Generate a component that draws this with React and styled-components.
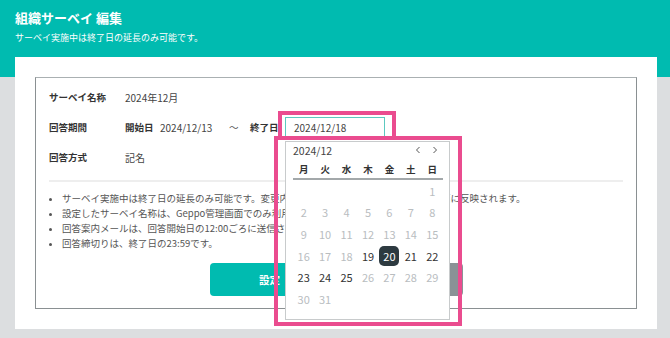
import React from 'react';
import styled, { createGlobalStyle } from 'styled-components';

const GlobalStyle = createGlobalStyle`
  body {
    margin: 0;
    background: #dcdee0;
    font-family: "Noto Sans CJK JP", "Noto Sans", sans-serif;
  }
`;

const Page = styled.div`
  width: 670px;
  height: 338px;
  overflow: hidden;
  background: #dcdee0;
`;

const Header = styled.div`
  height: 77px;
  box-sizing: border-box;
  padding: 7px 15px 0;
  background: #00bbb0;
  color: #fff;
`;

const Title = styled.div`
  font-size: 13px;
  font-weight: 700;
  line-height: 21px;
`;

const Sub = styled.div`
  font-size: 9px;
  line-height: 16px;
  margin-top: 2px;
`;

const Card = styled.div`
  margin: -20px 13px 0 15px;
  height: 272px;
  box-sizing: border-box;
  padding: 20px 20px 20px;
  background: #fff;
`;

const Frame = styled.div`
  position: relative;
  border: 1px solid #8a9092;
  border-top-color: #aab0b2;
  padding: 4px 13px 12px;
  color: #333;
`;

const Row = styled.div`
  display: flex;
  align-items: center;
  height: 30px;
  font-size: 9.5px;
`;

const Label = styled.div`
  width: 76px;
  flex-shrink: 0;
  font-weight: 700;
`;

const Sublabel = styled.span`
  width: 35px;
  flex-shrink: 0;
  font-weight: 700;
`;

const Value = styled.span`
  color: #444;
  font-size: 10px;
  width: ${p => p.$w || 'auto'};
  flex-shrink: 0;
`;

const Tilde = styled.span`
  width: 21px;
  flex-shrink: 0;
  color: #555;
`;

const InputWrap = styled.div`
  position: relative;
`;

const DateInput = styled.div`
  width: 100px;
  height: 20px;
  box-sizing: border-box;
  border: 1px solid #5cc9c0;
  padding-left: 8px;
  display: flex;
  align-items: center;
  font-size: 10px;
  color: #444;
`;

const Highlight = styled.div`
  position: absolute;
  box-sizing: border-box;
  border: 4px solid #ea4c8f;
  pointer-events: none;
  z-index: 3;
`;

const Popup = styled.div`
  position: absolute;
  top: 24px;
  left: 0;
  width: 165px;
  height: 179px;
  box-sizing: border-box;
  border: 1px solid #c8cbcc;
  background: #fff;
  padding: 0 7px;
  z-index: 2;
`;

const CalHead = styled.div`
  display: flex;
  align-items: center;
  justify-content: space-between;
  height: 16px;
  font-size: 10.5px;
  color: #444;
`;

const Nav = styled.div`
  display: flex;
  gap: 11px;
  padding-right: 4px;
`;

const Week = styled.div`
  display: grid;
  grid-template-columns: repeat(7, 1fr);
  width: 150px;
  height: 18px;
  align-items: center;
  margin-top: 2px;
  border-bottom: 2px solid #a3a8aa;
  font-size: 9.5px;
  font-weight: 700;
  color: #333;
  text-align: center;
`;

const Days = styled.div`
  display: grid;
  grid-template-columns: repeat(7, 1fr);
  grid-auto-rows: 21.6px;
  width: 150px;
`;

const Day = styled.div`
  display: flex;
  align-items: center;
  justify-content: center;
  font-size: 11px;
  color: ${p => (p.$on ? '#333' : '#b9bdbf')};
`;

const Selected = styled.span`
  display: flex;
  align-items: center;
  justify-content: center;
  width: 20px;
  height: 20px;
  border-radius: 5px;
  background: #2d3a40;
  color: #fff;
`;

const Divider = styled.div`
  height: 2px;
  background: #eeeeee;
  margin-top: 8px;
`;

const Notes = styled.ul`
  margin: 9px 0 0;
  padding-left: 13px;
  font-size: 9.5px;
  line-height: 15px;
  color: #555;
  li::marker {
    font-size: 9px;
  }
`;

const Buttons = styled.div`
  display: flex;
  justify-content: center;
  gap: 13px;
  margin-top: 12px;
`;

const Button = styled.div`
  width: 120px;
  height: 33px;
  border-radius: 4px;
  display: flex;
  align-items: center;
  justify-content: center;
  font-size: 10.5px;
  font-weight: 700;
  color: #fff;
  background: ${p => (p.$gray ? '#8a9296' : '#00bbb0')};
`;

const Chevron = ({ dir }) => (
  <svg width="6" height="8" viewBox="0 0 6 8">
    <path
      d={dir === 'left' ? 'M4.5 1 L1.5 4 L4.5 7' : 'M1.5 1 L4.5 4 L1.5 7'}
      fill="none"
      stroke="#555"
      strokeWidth="1"
    />
  </svg>
);

const weekdays = ['月', '火', '水', '木', '金', '土', '日'];

const App = () => {
  const cells = [];
  for (let i = 0; i < 6; i++) cells.push(null);
  for (let d = 1; d <= 31; d++) cells.push(d);

  return (
    <Page>
      <GlobalStyle />
      <Header>
        <Title>組織サーベイ 編集</Title>
        <Sub>サーベイ実施中は終了日の延長のみ可能です。</Sub>
      </Header>
      <Card>
        <Frame>
          <Row>
            <Label>サーベイ名称</Label>
            <Value>2024年12月</Value>
          </Row>
          <Row>
            <Label>回答期間</Label>
            <Sublabel>開始日</Sublabel>
            <Value $w="69px">2024/12/13</Value>
            <Tilde>～</Tilde>
            <Sublabel>終了日</Sublabel>
            <InputWrap>
              <DateInput>2024/12/18</DateInput>
              <Highlight style={{ left: -7, top: -6, width: 118, height: 29 }} />
              <Popup>
                <CalHead>
                  <span>2024/12</span>
                  <Nav>
                    <Chevron dir="left" />
                    <Chevron dir="right" />
                  </Nav>
                </CalHead>
                <Week>
                  {weekdays.map(w => (
                    <span key={w}>{w}</span>
                  ))}
                </Week>
                <Days>
                  {cells.map((d, i) => (
                    <Day key={i} $on={d >= 19 && d <= 25}>
                      {d === 20 ? <Selected>20</Selected> : d}
                    </Day>
                  ))}
                </Days>
              </Popup>
              <Highlight style={{ left: -11, top: 19, width: 188, height: 190 }} />
            </InputWrap>
          </Row>
          <Row>
            <Label>回答方式</Label>
            <Value>記名</Value>
          </Row>
          <Divider />
          <Notes>
            <li>サーベイ実施中は終了日の延長のみ可能です。変更内容は保存後すぐ回答者のサーベイ画面に反映されます。</li>
            <li>設定したサーベイ名称は、Geppo管理画面でのみ利用されます。</li>
            <li>回答案内メールは、回答開始日の12:00ごろに送信されます。</li>
            <li>回答締切りは、終了日の23:59です。</li>
          </Notes>
          <Buttons>
            <Button>設定</Button>
            <Button $gray>キャンセル</Button>
          </Buttons>
        </Frame>
      </Card>
    </Page>
  );
};

export default App;
